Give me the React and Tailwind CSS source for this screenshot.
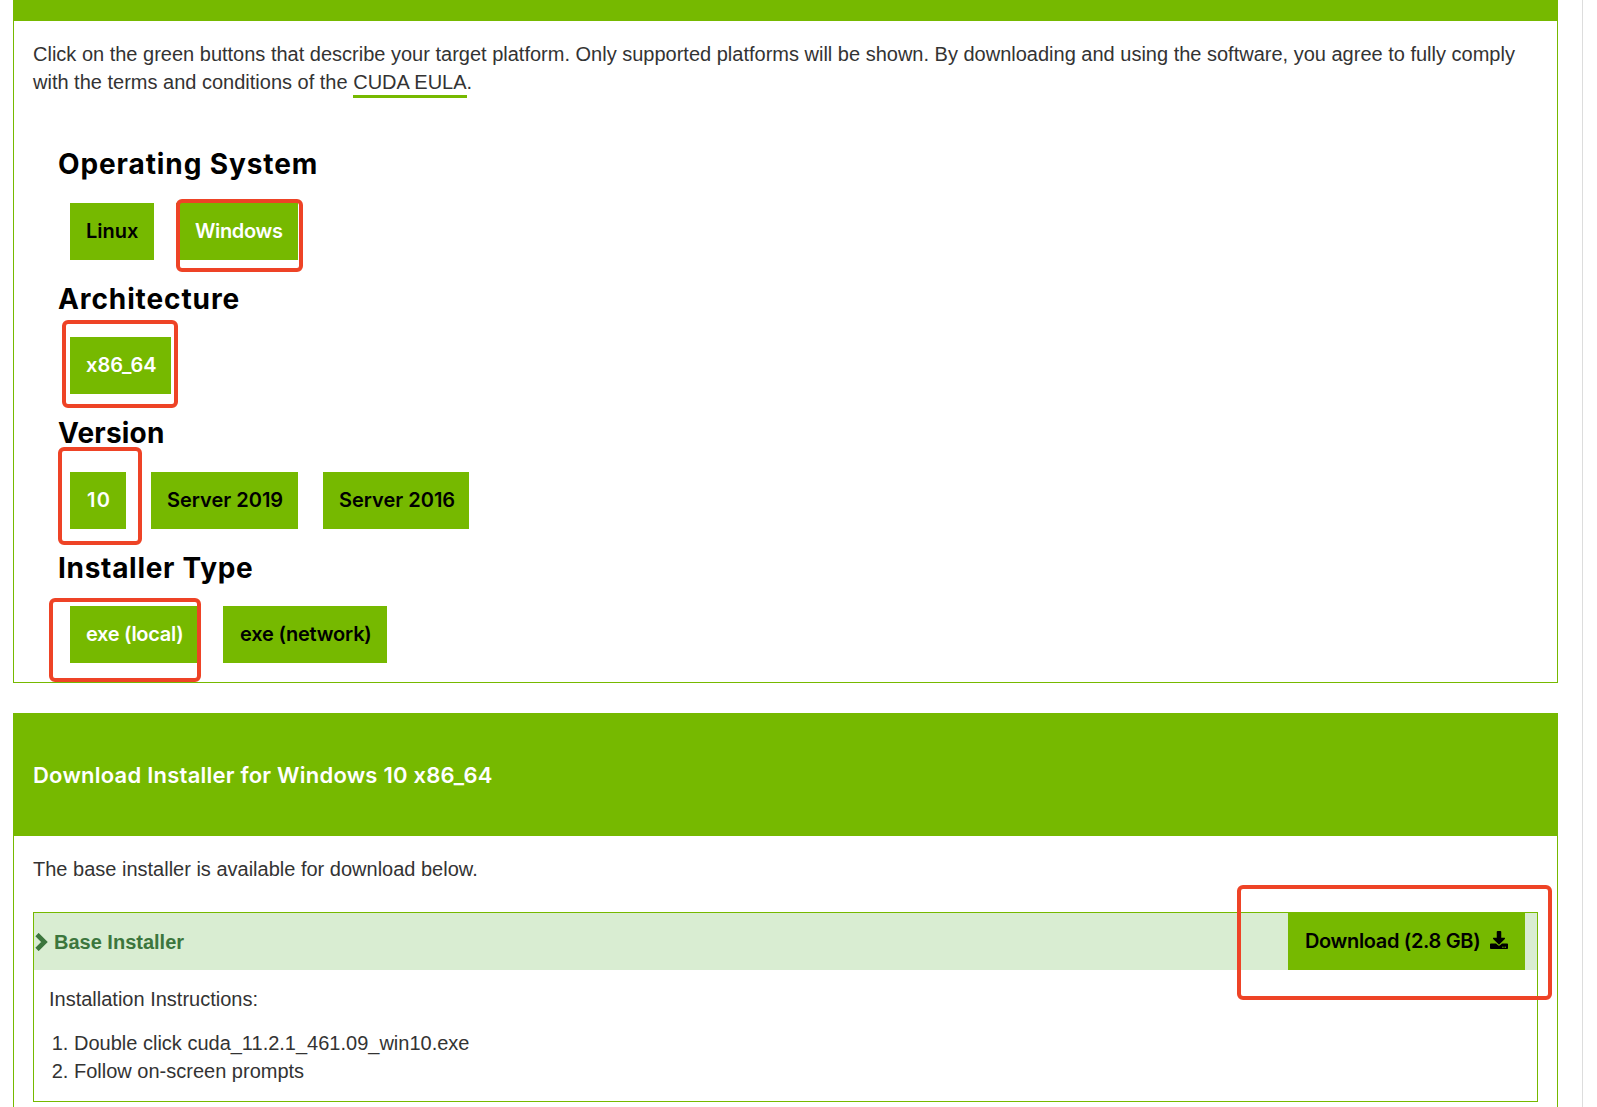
import { FaDownload } from "react-icons/fa";

const HEAD = "font-['Inter','Roboto',sans-serif] [font-feature-settings:'calt'_0]";

function Btn({ children, active, className = "pl-4" }) {
  return (
    <div className={`h-[57px] pb-[1px] flex items-center bg-[#76b900] text-[20px] font-semibold whitespace-nowrap ${HEAD} ${active ? "text-white" : "text-black"} ${className}`}>
      {children}
    </div>
  );
}

function Mark({ className }) {
  return <div className={`absolute border-[4px] border-[#ee4326] rounded-[6px] ${className}`} />;
}

function Heading({ children, className = "tracking-[0.9px]" }) {
  return <div className={`text-[28px] leading-[34px] font-bold text-black ${HEAD} ${className}`}>{children}</div>;
}

export default function App() {
  return (
    <div className="relative w-[1597px] h-[1107px] overflow-hidden bg-white font-['Liberation_Sans',sans-serif] text-[20px] leading-[28px] text-[#333]">
      <div className="absolute right-[14px] top-0 bottom-0 w-px bg-[#ddd]" />
      <div className="pl-[13px] w-[1558px]">
        <div className="h-[21px] bg-[#76b900]" />
        <div className="h-[662px] border border-t-0 border-[#76b900] pl-[19px] pr-[19px] pt-[19px]">
          <p>
            Click on the green buttons that describe your target platform. Only supported platforms will be shown. By downloading and using the software, you agree to fully comply with the terms and conditions of the{" "}
            <span className="pb-[2px] border-b-[3px] border-[#76b900]">CUDA EULA</span>.
          </p>
          <div className="pl-[25px] pt-[51px]">
            <Heading>Operating System</Heading>
            <div className="flex gap-[22px] pl-[12px] mt-[22px]">
              <Btn className="w-[84px] pl-4">Linux</Btn>
              <Btn active className="w-[122px] pl-[19px] tracking-[-0.35px]">Windows</Btn>
            </div>
            <div className="mt-[22px]"><Heading>Architecture</Heading></div>
            <div className="flex pl-[12px] mt-[21px]">
              <Btn active className="w-[101px] pl-4">x86_64</Btn>
            </div>
            <div className="mt-[22px]"><Heading className="tracking-[0.2px]">Version</Heading></div>
            <div className="flex gap-[25px] pl-[12px] mt-[22px]">
              <Btn active className="w-[56px] pl-[17px] tracking-[1.2px]">10</Btn>
              <Btn className="w-[147px] pl-4">Server 2019</Btn>
              <Btn className="w-[146px] pl-4">Server 2016</Btn>
            </div>
            <div className="mt-[22px]"><Heading className="tracking-[0.7px]">Installer Type</Heading></div>
            <div className="flex gap-[25px] pl-[12px] mt-[21px]">
              <Btn active className="w-[128px] pl-4 tracking-[-0.3px]">exe (local)</Btn>
              <Btn className="w-[164px] pl-[17px] tracking-[-0.2px]">exe (network)</Btn>
            </div>
          </div>
        </div>
        <div className="mt-[30px] h-[123px] bg-[#76b900] flex items-center pl-[20px] text-white">
          <span className={`text-[22px] font-semibold tracking-[0.23px] ${HEAD}`}>Download Installer for Windows 10 x86_64</span>
        </div>
        <div className="h-[271px] border-x border-[#76b900] px-[19px] pt-[19px]">
          <p>The base installer is available for download below.</p>
          <div className="mt-[29px] h-[190px] border border-[#76b900]">
            <div className="h-[57px] bg-[#d9edd2] flex items-center justify-between pr-[12px]">
              <div className="flex items-center text-[#3c763d] font-bold">
                <svg width="14" height="18" viewBox="0 0 14 18" className="mr-[6px]">
                  <path d="M3 1.5 L10.5 9 L3 16.5" fill="none" stroke="#3c763d" strokeWidth="4.6" />
                </svg>
                <span>Base Installer</span>
              </div>
              <div className={`w-[237px] h-[58px] -mt-px pl-[17px] bg-[#76b900] flex items-center gap-[10px] text-black text-[20px] font-semibold tracking-[-0.35px] ${HEAD}`}>
                <span>Download (2.8 GB)</span>
                <FaDownload size={18} color="#000" className="-mt-[2px]" />
              </div>
            </div>
            <div className="pl-[15px] pt-[15px]">
              <p>Installation Instructions:</p>
              <ol className="mt-[16px] pl-[25px] list-decimal">
                <li>Double click cuda_11.2.1_461.09_win10.exe</li>
                <li>Follow on-screen prompts</li>
              </ol>
            </div>
          </div>
        </div>
      </div>
      <Mark className="left-[176px] top-[199px] w-[127px] h-[73px]" />
      <Mark className="left-[62px] top-[320px] w-[116px] h-[88px]" />
      <Mark className="left-[58px] top-[447px] w-[84px] h-[98px]" />
      <Mark className="left-[49px] top-[598px] w-[152px] h-[84px]" />
      <Mark className="left-[1237px] top-[885px] w-[315px] h-[115px]" />
    </div>
  );
}
